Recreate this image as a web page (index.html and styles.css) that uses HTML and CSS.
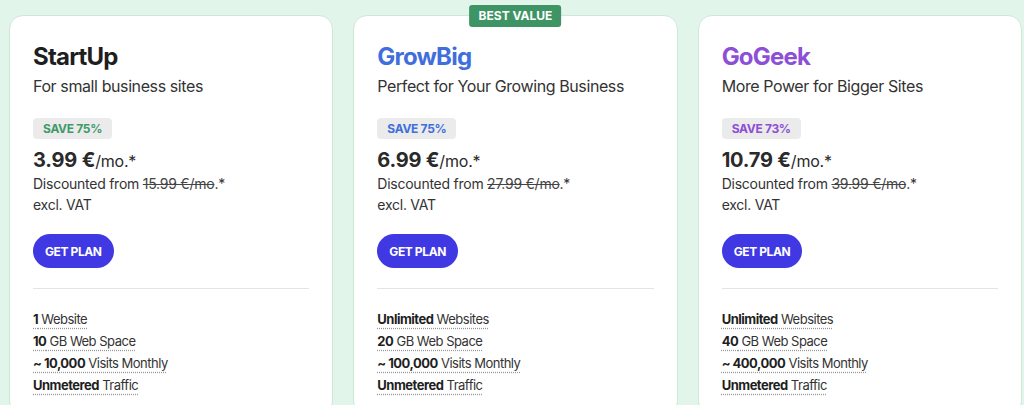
FILE: index.html
```html
<!DOCTYPE html>
<html lang="en">
<head>
  <meta charset="UTF-8" />
  <meta name="viewport" content="width=device-width, initial-scale=1.0"/>
  <title>Hosting Plans</title>
  <link rel="stylesheet" href="styles.css">
</head>
<body>

  <div class="plans">

    <div class="plan">
      <h2 class="plan-name">StartUp</h2>
      <p class="plan-tagline">For small business sites</p>
      <span class="save save-green">SAVE 75%</span>
      <div class="price"><strong>3.99 €</strong>/mo.*</div>
      <div class="price-note">Discounted from <s>15.99 €/mo</s>.*</div>
      <div class="price-note">excl. VAT</div>
      <button class="get-plan">GET PLAN</button>
      <hr class="divider">
      <ul class="features">
        <li><span><b>1</b> Website</span></li>
        <li><span><b>10</b> GB Web Space</span></li>
        <li><span><b>~ 10,000</b> Visits Monthly</span></li>
        <li><span><b>Unmetered</b> Traffic</span></li>
      </ul>
    </div>

    <div class="plan">
      <div class="best-value">BEST VALUE</div>
      <h2 class="plan-name blue">GrowBig</h2>
      <p class="plan-tagline">Perfect for Your Growing Business</p>
      <span class="save save-blue">SAVE 75%</span>
      <div class="price"><strong>6.99 €</strong>/mo.*</div>
      <div class="price-note">Discounted from <s>27.99 €/mo</s>.*</div>
      <div class="price-note">excl. VAT</div>
      <button class="get-plan">GET PLAN</button>
      <hr class="divider">
      <ul class="features">
        <li><span><b>Unlimited</b> Websites</span></li>
        <li><span><b>20</b> GB Web Space</span></li>
        <li><span><b>~ 100,000</b> Visits Monthly</span></li>
        <li><span><b>Unmetered</b> Traffic</span></li>
      </ul>
    </div>

    <div class="plan">
      <h2 class="plan-name purple">GoGeek</h2>
      <p class="plan-tagline">More Power for Bigger Sites</p>
      <span class="save save-purple">SAVE 73%</span>
      <div class="price"><strong>10.79 €</strong>/mo.*</div>
      <div class="price-note">Discounted from <s>39.99 €/mo</s>.*</div>
      <div class="price-note">excl. VAT</div>
      <button class="get-plan">GET PLAN</button>
      <hr class="divider">
      <ul class="features">
        <li><span><b>Unlimited</b> Websites</span></li>
        <li><span><b>40</b> GB Web Space</span></li>
        <li><span><b>~ 400,000</b> Visits Monthly</span></li>
        <li><span><b>Unmetered</b> Traffic</span></li>
      </ul>
    </div>

  </div>

</body>
</html>
```

FILE: styles.css
```css
* { box-sizing: border-box; }

body {
  margin: 0;
  background: #e1f5ea;
  color: #2a2a2a;
  font-family: Inter, 'Noto Sans', sans-serif;
  height: 405px;
  overflow: hidden;
}

.plans {
  display: grid;
  grid-template-columns: repeat(3, 1fr);
  gap: 20px;
  padding: 15px 2px 0 9px;
}

.plan {
  position: relative;
  display: flex;
  flex-direction: column;
  align-items: flex-start;
  background: #fff;
  border: 1px solid #cfe7d9;
  border-radius: 14px;
  padding: 26px 23px 0;
  height: 400px;
}

.best-value {
  position: absolute;
  top: -11px;
  left: 50%;
  transform: translateX(-50%);
  background: #3e9464;
  color: #fff;
  font-size: 12px;
  font-weight: 700;
  padding: 3px 9px 4px;
  border-radius: 3px;
  line-height: 15px;
}

.plan-name {
  margin: 0;
  font-size: 24px;
  font-weight: 700;
  line-height: 29px;
  color: #1e1e1e;
  letter-spacing: -0.8px;
}

.plan-name.blue { color: #3f6fdc; }
.plan-name.purple { color: #8d4fd6; }

.plan-tagline {
  margin: 3px 0 0;
  font-size: 16px;
  line-height: 24px;
  letter-spacing: -0.4px;
  color: #333;
}

.save {
  margin-top: 20px;
  background: #ebebeb;
  border-radius: 4px;
  font-size: 12px;
  font-weight: 700;
  line-height: 21px;
  letter-spacing: -0.3px;
  padding: 0 10px;
}

.save-green { color: #3f9a6a; }
.save-blue { color: #3f6fdc; }
.save-purple { color: #8d4fd6; }

.price {
  margin-top: 9px;
  font-size: 16px;
  line-height: 24px;
  letter-spacing: -0.2px;
}

.price strong {
  font-size: 20px;
  font-weight: 700;
}

.price-note {
  font-size: 14px;
  line-height: 21px;
  letter-spacing: -0.25px;
  color: #333;
}

.price-note s { color: #444; }

.get-plan {
  margin-top: 19px;
  background: #4039e3;
  color: #fff;
  border: none;
  border-radius: 17px;
  height: 34px;
  padding: 0 12px;
  font-family: Inter, sans-serif;
  font-size: 12px;
  font-weight: 700;
  letter-spacing: -0.4px;
  cursor: pointer;
}

.divider {
  align-self: stretch;
  margin: 20px 0 0;
  border: none;
  border-top: 1px solid #e4e4e4;
}

.features {
  list-style: none;
  margin: 19px 0 0;
  padding: 0;
}

.features li {
  font-size: 13px;
  line-height: 22px;
  letter-spacing: -0.5px;
  color: #333;
}

.features b {
  color: #1e1e1e;
  font-weight: 700;
}

.features span {
  text-decoration: underline dotted #999;
  text-underline-offset: 4px;
}
```
